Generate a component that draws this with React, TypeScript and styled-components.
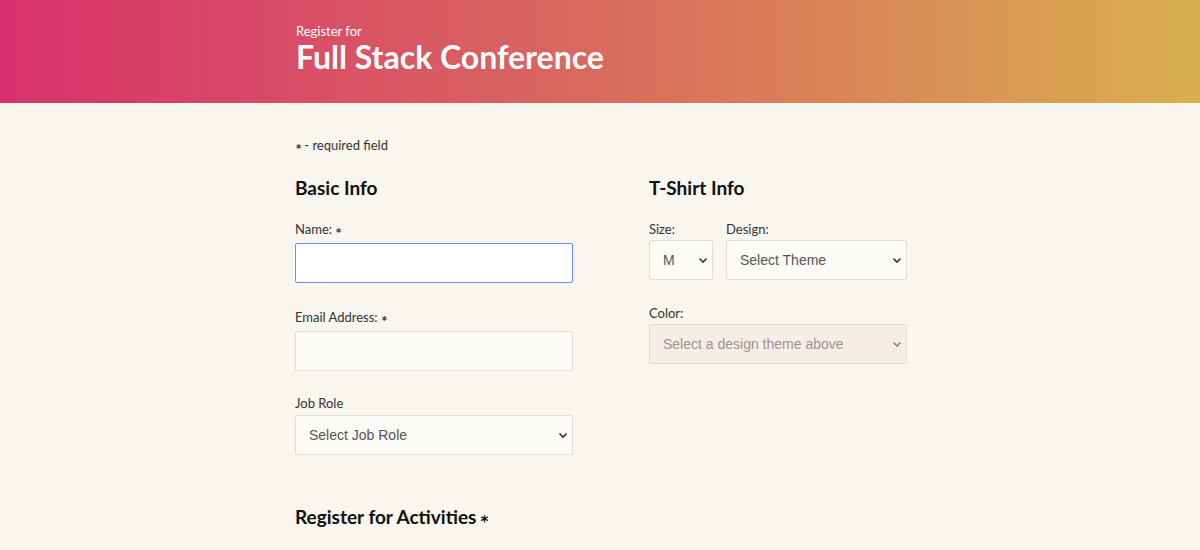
import React from "react";
import styled, { createGlobalStyle } from "styled-components";

const Global = createGlobalStyle`
  html, body { margin: 0; padding: 0; }
  body {
    background: #f9f5ef;
    font-family: "Lato", "Noto Sans", sans-serif;
    color: #222;
  }
  * { box-sizing: border-box; }
`;

const Header = styled.header`
  height: 103px;
  background: linear-gradient(90deg, #d8316d 0%, #d96a5e 50%, #d9af4f 100%);
  color: #fff;
  padding-top: 25px;
`;

const Inner = styled.div`
  width: 610px;
  margin: 0 auto;
  padding-left: 1px;
`;

const Kicker = styled.div`
  font-size: 13px;
  line-height: 13px;
`;

const Title = styled.h1`
  margin: 0;
  font-size: 32px;
  line-height: 38px;
  font-weight: 700;
`;

const Main = styled.main`
  width: 610px;
  margin: 0 auto;
  padding-top: 34px;
`;

const Note = styled.p`
  margin: 0 0 22px;
  font-size: 13px;
  line-height: 16px;
  color: #333;
`;

const Columns = styled.div`
  display: grid;
  grid-template-columns: 278px 258px;
  column-gap: 76px;
  align-items: start;
`;

const Column = styled.section`
  display: flex;
  flex-direction: column;
`;

const SectionTitle = styled.h2`
  margin: 0 0 21px;
  font-size: 19px;
  line-height: 24px;
  font-weight: 700;
  color: #111;
`;

const Field = styled.div<{ $gap?: number }>`
  display: flex;
  flex-direction: column;
  margin-bottom: ${(p) => p.$gap ?? 26}px;
`;

const Label = styled.label<{ $space?: number }>`
  font-size: 13px;
  line-height: 16px;
  color: #333;
  margin-bottom: ${(p) => p.$space ?? 3}px;
`;

const Star = styled.span<{ $big?: boolean }>`
  display: inline-block;
  font-family: "DejaVu Sans", sans-serif;
  font-weight: 700;
  font-size: ${(p) => (p.$big ? "15px" : "10px")};
  vertical-align: ${(p) => (p.$big ? "-3px" : "-2px")};
  line-height: 1;
  margin: 0 3px 0 4px;
`;

const TextInput = styled.input<{ $focus?: boolean }>`
  width: 100%;
  height: 40px;
  border: 1px solid ${(p) => (p.$focus ? "#6b8cf0" : "#e2ddd6")};
  background: ${(p) => (p.$focus ? "#ffffff" : "#fdfbf7")};
  border-radius: 2px;
  outline: none;
  font-family: "Liberation Sans", Arial, sans-serif;
  font-size: 14px;
  padding: 0 13px;
`;

const SelectWrap = styled.div<{ $w?: number }>`
  position: relative;
  width: ${(p) => (p.$w ? `${p.$w}px` : "100%")};
`;

const Select = styled.select<{ $disabled?: boolean }>`
  appearance: none;
  width: 100%;
  height: 40px;
  border: 1px solid #e2ddd6;
  background: ${(p) => (p.$disabled ? "#f5eee8" : "#fdfbf7")};
  border-radius: 2px;
  font-family: "Liberation Sans", Arial, sans-serif;
  font-size: 14px;
  color: ${(p) => (p.$disabled ? "#9a9590" : "#555")};
  padding: 0 13px;
  outline: none;
  opacity: 1;
`;

const Chevron = styled.svg<{ $muted?: boolean }>`
  position: absolute;
  right: 5px;
  top: 17px;
  width: 10px;
  height: 7px;
  pointer-events: none;
  stroke: ${(p) => (p.$muted ? "#888" : "#333")};
`;

const Row = styled.div`
  display: flex;
  gap: 13px;
  margin-bottom: 25px;
`;

const Activities = styled.h2`
  margin: 50px 0 0;
  font-size: 19px;
  line-height: 24px;
  font-weight: 700;
  color: #111;
`;

const Arrow = ({ muted }: { muted?: boolean }) => (
  <Chevron $muted={muted} viewBox="0 0 10 7" fill="none" strokeWidth="1.6">
    <path d="M1.5 1.5 L5 5 L8.5 1.5" />
  </Chevron>
);

export default function App() {
  return (
    <>
      <Global />
      <Header>
        <Inner>
          <Kicker>Register for</Kicker>
          <Title>Full Stack Conference</Title>
        </Inner>
      </Header>
      <Main>
        <Note>
          <Star style={{ marginLeft: 1 }}>*</Star>- required field
        </Note>
        <Columns>
          <Column>
            <SectionTitle>Basic Info</SectionTitle>
            <Field>
              <Label $space={5}>
                Name:<Star>*</Star>
              </Label>
              <TextInput $focus />
            </Field>
            <Field $gap={24}>
              <Label $space={5}>
                Email Address:<Star>*</Star>
              </Label>
              <TextInput />
            </Field>
            <Field $gap={0}>
              <Label $space={4}>Job Role</Label>
              <SelectWrap>
                <Select defaultValue="">
                  <option value="">Select Job Role</option>
                </Select>
                <Arrow />
              </SelectWrap>
            </Field>
          </Column>
          <Column>
            <SectionTitle>T-Shirt Info</SectionTitle>
            <Row>
              <Field $gap={0}>
                <Label>Size:</Label>
                <SelectWrap $w={64}>
                  <Select defaultValue="M">
                    <option value="M">M</option>
                  </Select>
                  <Arrow />
                </SelectWrap>
              </Field>
              <Field $gap={0}>
                <Label>Design:</Label>
                <SelectWrap $w={181}>
                  <Select defaultValue="">
                    <option value="">Select Theme</option>
                  </Select>
                  <Arrow />
                </SelectWrap>
              </Field>
            </Row>
            <Field $gap={0}>
              <Label>Color:</Label>
              <SelectWrap>
                <Select $disabled disabled defaultValue="">
                  <option value="">Select a design theme above</option>
                </Select>
                <Arrow muted />
              </SelectWrap>
            </Field>
          </Column>
        </Columns>
        <Activities>
          Register for Activities<Star $big>*</Star>
        </Activities>
      </Main>
    </>
  );
}
